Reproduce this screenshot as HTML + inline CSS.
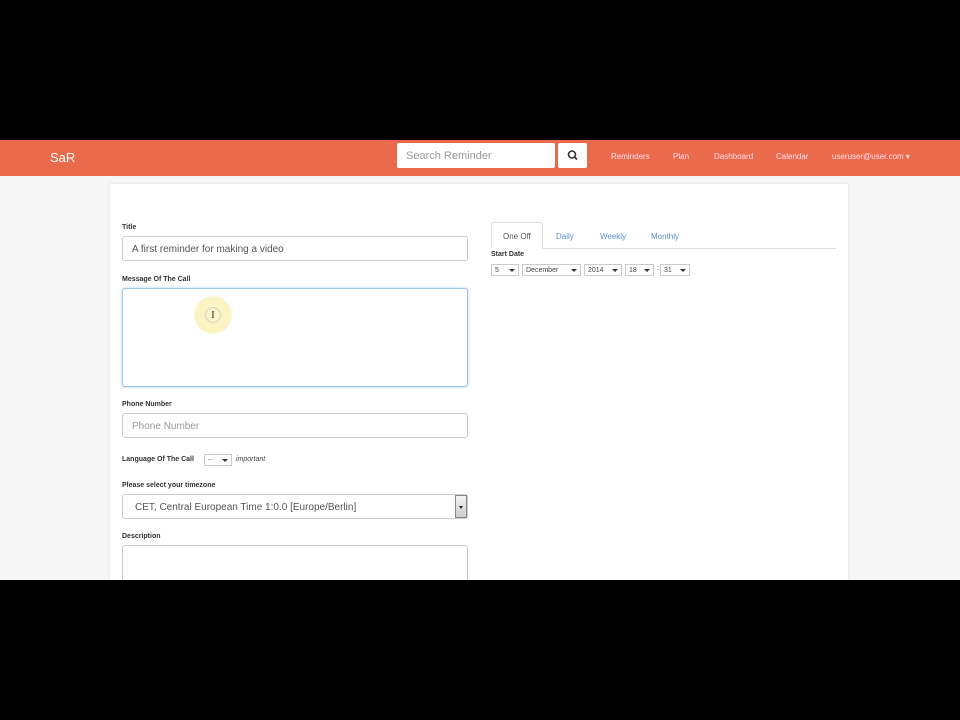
<!DOCTYPE html>
<html><head><meta charset="utf-8"><style>
*{box-sizing:border-box;margin:0;padding:0}
body{width:960px;height:720px;background:#000;font-family:"Liberation Sans",sans-serif;position:relative;overflow:hidden}
.scr{position:absolute;left:0;top:140px;width:960px;height:440px;background:#f7f7f7;overflow:hidden}
.nav{position:absolute;left:0;top:0;width:960px;height:36px;background:#ea6b4b}
.brand{position:absolute;left:50px;top:10px;color:#fff;font-size:13px}
.search{position:absolute;left:397px;top:3px;width:158px;height:25px;background:#fff;border-radius:2px;color:#999;font-size:11px;padding:7px 9px}
.sbtn{position:absolute;left:558px;top:3px;width:29px;height:25px;background:#fff;border-radius:2px}
.nl{position:absolute;top:12px;color:#fde;font-size:8px}
.card{position:absolute;left:110px;top:44px;width:738px;height:420px;background:#fff;box-shadow:0 0 3px rgba(0,0,0,.12)}
.lbl{position:absolute;font-size:7px;font-weight:bold;color:#333}
.inp{position:absolute;left:12px;width:346px;background:#fff;border:1px solid #ccc;border-radius:3px;font-size:10px;color:#555;padding:0 9px}
.tab{position:absolute;top:37px;font-size:8px;color:#5b8fc7}
.sel{position:absolute;top:80px;height:12px;border:1px solid #ccc;font-size:7px;color:#444;padding:0 3px;line-height:11px}
.sel:after{content:"";position:absolute;right:3px;top:4px;border:3px solid transparent;border-top:3px solid #333}
</style></head><body>
<div class="scr">
<div class="nav">
<div class="brand">SaR</div>
<div class="search">Search Reminder</div>
<div class="sbtn"><svg width="29" height="25"><circle cx="14" cy="11.5" r="3.5" fill="none" stroke="#333" stroke-width="1.6"/><line x1="16.5" y1="14" x2="19" y2="16.5" stroke="#333" stroke-width="1.8"/></svg></div>
<div class="nl" style="left:611px">Reminders</div>
<div class="nl" style="left:673px">Plan</div>
<div class="nl" style="left:714px">Dashboard</div>
<div class="nl" style="left:776px">Calendar</div>
<div class="nl" style="left:832px">useruser@user.com ▾</div>
</div>
<div class="card">
<div class="lbl" style="left:12px;top:40px">Title</div>
<div class="inp" style="top:52px;height:25px;line-height:25px">A first reminder for making a video</div>
<div class="lbl" style="left:12px;top:92px">Message Of The Call</div>
<div class="inp" style="top:104px;height:99px;border-color:#9ec3e6;box-shadow:0 0 3px rgba(102,175,233,.5)"></div>
<div style="position:absolute;left:84px;top:112px;width:38px;height:38px;border-radius:50%;background:radial-gradient(#fdf7d4,#fbf3c0 60%,rgba(251,243,192,0))"></div>
<div style="position:absolute;left:95px;top:123px;width:16px;height:16px;border-radius:50%;border:1px solid #d8cfa6;font-family:'Liberation Serif',serif;font-size:11px;text-align:center;line-height:14px;color:#333">I</div>
<div class="lbl" style="left:12px;top:217px">Phone Number</div>
<div class="inp" style="top:229px;height:25px;line-height:25px;color:#999">Phone Number</div>
<div class="lbl" style="left:12px;top:272px">Language Of The Call</div>
<div class="sel" style="left:94px;top:270px;width:28px;color:#666">--</div>
<div style="position:absolute;left:126px;top:272px;font-size:7px;font-style:italic;color:#444">important</div>
<div class="lbl" style="left:12px;top:298px">Please select your timezone</div>
<div class="inp" style="top:310px;height:25px;line-height:25px;padding-left:12px">CET, Central European Time 1:0.0 [Europe/Berlin]</div>
<div style="position:absolute;left:345px;top:311px;width:12px;height:23px;background:linear-gradient(#f4f4f4,#ccc);border:1px solid #888"><div style="position:absolute;left:3px;top:10px;border:2.5px solid transparent;border-top:3px solid #222"></div></div>
<div class="lbl" style="left:12px;top:349px">Description</div>
<div class="inp" style="top:361px;height:60px"></div>
<div style="position:absolute;left:381px;top:64px;width:345px;height:1px;background:#ddd"></div>
<div style="position:absolute;left:381px;top:38px;width:52px;height:27px;border:1px solid #ddd;border-bottom:1px solid #fff;background:#fff;border-radius:3px 3px 0 0"></div>
<div class="tab" style="left:393px;top:48px;color:#555">One Off</div>
<div class="tab" style="left:446px;top:48px">Daily</div>
<div class="tab" style="left:490px;top:48px">Weekly</div>
<div class="tab" style="left:541px;top:48px">Monthly</div>
<div class="lbl" style="left:381px;top:67px">Start Date</div>
<div class="sel" style="left:381px;width:28px">5</div>
<div class="sel" style="left:412px;width:59px">December</div>
<div class="sel" style="left:474px;width:38px">2014</div>
<div class="sel" style="left:515px;width:29px">18</div>
<div style="position:absolute;left:547px;top:81px;font-size:7px">:</div>
<div class="sel" style="left:550px;width:30px">31</div>
</div>
</div>
</body></html>
